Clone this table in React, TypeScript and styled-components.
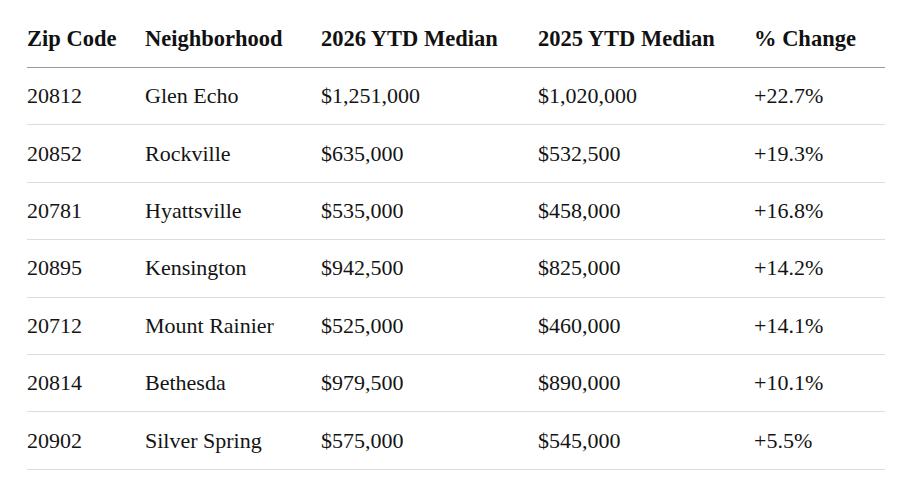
import { FC } from 'react'

import styled, { createGlobalStyle } from 'styled-components'

const GlobalStyle = createGlobalStyle`
  html, body {
    margin: 0;
    padding: 0;
    background: #ffffff;
  }
  body {
    font-family: 'Liberation Serif', 'Times New Roman', serif;
    color: #161616;
  }
`

type Row = {
  zip: string
  hood: string
  current: string
  previous: string
  change: string
}

const rows: Row[] = [
  { zip: '20812', hood: 'Glen Echo', current: '$1,251,000', previous: '$1,020,000', change: '+22.7%' },
  { zip: '20852', hood: 'Rockville', current: '$635,000', previous: '$532,500', change: '+19.3%' },
  { zip: '20781', hood: 'Hyattsville', current: '$535,000', previous: '$458,000', change: '+16.8%' },
  { zip: '20895', hood: 'Kensington', current: '$942,500', previous: '$825,000', change: '+14.2%' },
  { zip: '20712', hood: 'Mount Rainier', current: '$525,000', previous: '$460,000', change: '+14.1%' },
  { zip: '20814', hood: 'Bethesda', current: '$979,500', previous: '$890,000', change: '+10.1%' },
  { zip: '20902', hood: 'Silver Spring', current: '$575,000', previous: '$545,000', change: '+5.5%' },
]

const Page = styled.div`
  padding: 11px 15px 0 27px;
`

const Table = styled.table`
  width: 858px;
  border-collapse: collapse;
  table-layout: fixed;
`

const Col = styled.col<{ w: number }>`
  width: ${({ w }) => w}px;
`

const HeadCell = styled.th`
  height: 56px;
  padding: 0;
  text-align: left;
  vertical-align: middle;
  font-size: 22.5px;
  font-weight: 700;
  color: #111111;
  border-bottom: 1px solid #9a9a9a;
`

const BodyRow = styled.tr`
  border-bottom: 1px solid #dcdcdc;
`

const Cell = styled.td`
  height: 56.4px;
  padding: 0;
  vertical-align: middle;
  font-size: 22px;
  font-weight: 400;
  color: #141414;
`

const columns = [118, 176, 217, 216, 131]

const App: FC = () => {
  return (
    <>
      <GlobalStyle />
      <Page>
        <Table>
          <colgroup>
            {columns.map((w, i) => (
              <Col key={i} w={w} />
            ))}
          </colgroup>
          <thead>
            <tr>
              <HeadCell>Zip Code</HeadCell>
              <HeadCell>Neighborhood</HeadCell>
              <HeadCell>2026 YTD Median</HeadCell>
              <HeadCell>2025 YTD Median</HeadCell>
              <HeadCell>% Change</HeadCell>
            </tr>
          </thead>
          <tbody>
            {rows.map((r) => (
              <BodyRow key={r.zip}>
                <Cell>{r.zip}</Cell>
                <Cell>{r.hood}</Cell>
                <Cell>{r.current}</Cell>
                <Cell>{r.previous}</Cell>
                <Cell>{r.change}</Cell>
              </BodyRow>
            ))}
          </tbody>
        </Table>
      </Page>
    </>
  )
}

export default App
